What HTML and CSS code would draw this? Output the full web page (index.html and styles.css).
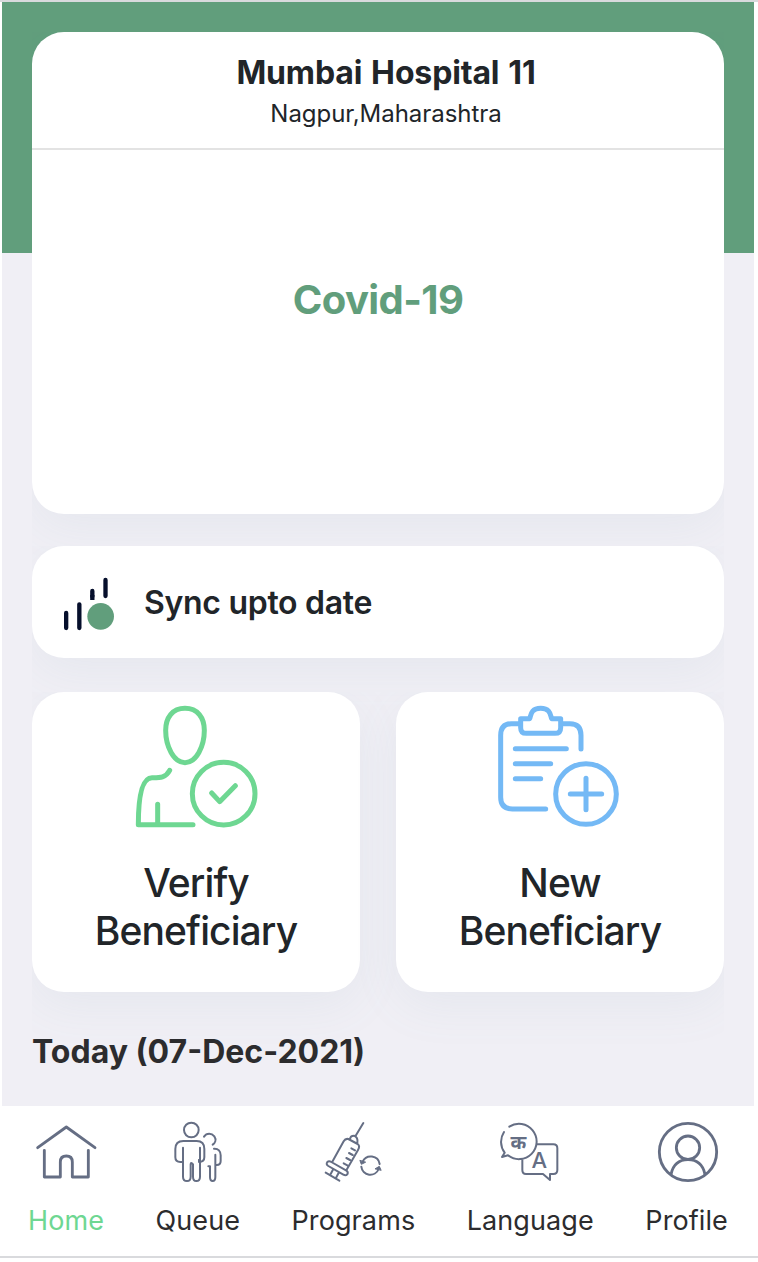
FILE: index.html
```html
<!DOCTYPE html>
<html lang="en">
<head>
<meta charset="utf-8">
<title>Home</title>
<link rel="stylesheet" href="styles.css">
</head>
<body>
<div class="app">
  <main class="content">
    <section class="card program">
      <header class="facility">
        <h1 class="facility-name">Mumbai Hospital 11</h1>
        <p class="facility-place">Nagpur,Maharashtra</p>
      </header>
      <div class="program-name">Covid-19</div>
    </section>
    <section class="card sync">
      <svg width="54" height="56" viewBox="126 258 162 168">
        <g stroke="#060f2c" stroke-width="13" stroke-linecap="round"><path d="M138.500 369v45M178 343v71M217 303v16M256.500 270v48"/><path stroke-linecap="butt" d="M217 315v15"/></g>
        <circle cx="242" cy="379" r="40" fill="#619e7c"/>
      </svg>
      <span class="sync-label">Sync upto date</span>
    </section>
    <section class="tiles">
      <a class="card tile">
        <svg class="tile-icon green" viewBox="36 24 384 384">
          <path d="M195 40c-38 0-58 28-58 66 0 48 24 97 58 97s58-49 58-97c0-38-20-66-58-66zM149 226c-12 23-30 22-53 22-32 0-41 66-41 141H219M113 328v60M275 294l24 26 47-48"/>
          <circle cx="311" cy="296" r="94"/>
        </svg>
        <span class="tile-label">Verify<br>Beneficiary</span>
      </a>
      <a class="card tile">
        <svg class="tile-icon blue" viewBox="48 24 384 384">
          <path d="M121 86H94Q62 86 62 121V307Q62 342 97 342H197M242 86H270Q303 86 303 121V162M122 71H149C153 61 152 40 182 40S211 61 215 71H242V98Q242 115 225 115H139Q122 115 122 98ZM106 161H259M106 206H212M106 251H182M318 250v94M271 297h94"/>
          <circle cx="318" cy="297" r="91"/>
        </svg>
        <span class="tile-label">New<br>Beneficiary</span>
      </a>
    </section>
    <h2 class="today">Today (07-Dec-2021)</h2>
  </main>
  <nav class="nav">
    <a class="nav-item active">
      <svg class="nav-icon bold" viewBox="101 75 192 192"><path d="M112 158L198 96L284 158M132 166V246H180V201Q180 183 198 183T216 201V246H264V166"/></svg>
      <span>Home</span>
    </a>
    <a class="nav-item">
      <svg class="nav-icon" viewBox="498 75 192 192">
        <circle cx="574" cy="105" r="22"/>
        <path d="M549 158V245Q549 258 561 258Q572 258 572 245V208Q572 204 574 204T579 208V245Q579 258 589 258Q600 258 600 245V158M549 201H541Q526 201 526 187V162Q526 138 550 138H590Q613 138 613 162V187Q613 201 597 201V194M612 125C620 113 635 114 643 124C650 134 645 144 638 149M642 161C655 160 662 169 662 181V198Q662 210 650 210M646 179V246Q646 258 638 258Q630 258 630 246V214H625"/>
      </svg>
      <span>Queue</span>
    </a>
    <a class="nav-item">
      <svg class="nav-icon" viewBox="216 75 192 192">
        <path d="M343 84L320 122M303 132Q304 122 315 122Q328 127 325 144M250 200L284 139Q289 130 298 132L326 147Q334 153 327 165L292 226M307 160l11 6M300 174l11 6M292 189l11 6M284 205l11 6M235 201Q240 196 247 201L291 226Q299 230 295 238Q290 243 283 239L238 213Q230 208 235 201ZM253 222l-8 15M270 232l-8 15M230 233L271 257M341 200A27 27 0 0 1 392 207M389 222A27 27 0 0 1 337 215"/>
        <path class="solid" d="M333 197L337 208L349 202ZM396 225L391 214L379 221Z"/>
      </svg>
      <span>Programs</span>
    </a>
    <a class="nav-item">
      <svg class="nav-icon" viewBox="57 75 192 192">
        <path d="M91 95A53 53 0 1 1 87 181L69 186L77 173A54 54 0 0 1 75 111M173 148H223Q235 148 235 160V225Q235 237 223 237H213V255L192 237H141Q130 237 130 225V192"/>
        <text class="glyph" x="118" y="161" font-size="57">क</text>
        <text class="glyph latin" x="181" y="218" font-size="66">A</text>
      </svg>
      <span>Language</span>
    </a>
    <a class="nav-item">
      <svg class="nav-icon bold" viewBox="525 75 192 192"><circle cx="624" cy="171" r="86"/><circle cx="624" cy="158" r="35"/><path d="M573 238C579 210 597 194 624 194S669 210 675 238"/></svg>
      <span>Profile</span>
    </a>
  </nav>
</div>
</body>
</html>
```
FILE: styles.css
```css
* { box-sizing: border-box; margin: 0; padding: 0; }
body {
  height: 1262px;
  overflow: hidden;
  background: #fff;
  font-family: Inter, "Liberation Sans", sans-serif;
  color: #212529;
}
.app {
  height: 1258px;
  padding: 0 4px 0 2px;
  border-top: 2px solid #d9dadd;
  border-bottom: 2px solid #d9dadd;
}
.content {
  height: 1104px;
  padding: 30px 30px 0;
  background: linear-gradient(#619e7c 251px, #f0eff5 251px);
}
.card {
  background: #fff;
  border-radius: 32px;
  box-shadow: 0 14px 48px rgba(110, 150, 170, .08);
}
.program, .sync, .tiles { clip-path: inset(0 0 -64px 0); }
.program { height: 482px; }
.facility {
  height: 118px;
  padding: 20px 0 0 16px;
  border-bottom: 2px solid #e3e3e3;
  text-align: center;
}
.facility-name { font-size: 32px; line-height: 42px; font-weight: 700; letter-spacing: -.15px; word-spacing: 1.500px; }
.facility-place { font-size: 24px; line-height: 40px; letter-spacing: -.05px; }
.program-name {
  padding-top: 120px;
  text-align: center;
  font-size: 40px;
  line-height: 60px;
  font-weight: 700;
  letter-spacing: -.6px;
  color: #619e7c;
}
.sync {
  display: flex;
  align-items: center;
  gap: 28px;
  height: 112px;
  margin-top: 32px;
  padding: 4px 30px 0;
}
.sync-label { margin-bottom: 3px; font-size: 32px; font-weight: 600; letter-spacing: -.3px; }
.tiles { display: flex; gap: 36px; margin-top: 34px; }
.tile {
  display: flex;
  flex-direction: column;
  align-items: center;
  flex: 1;
  height: 300px;
  padding-top: 11px;
}
.tile-icon { width: 128px; height: 128px; fill: none; stroke-width: 15; stroke-linecap: round; stroke-linejoin: round; }
.green { stroke: #6ed792; }
.blue { stroke: #74b9f5; }
.tile-label { margin-top: 28px; font-size: 39px; line-height: 48px; font-weight: 500; letter-spacing: -.9px; text-align: center; }
.today { margin-top: 40px; font-size: 32px; line-height: 40px; font-weight: 700; color: #2c2c2e; }
.nav {
  display: flex;
  justify-content: space-between;
  height: 150px;
  padding: 14px 26px 0;
  background: #fff;
  color: #2c2c2e;
  font-size: 27px;
  line-height: 36px;
  letter-spacing: .1px;
}
.nav-item { display: flex; flex-direction: column; align-items: center; gap: 19px; }
.active { color: #6ed792; }
.nav-icon { width: 64px; height: 64px; fill: none; stroke: #656e84; stroke-width: 6; stroke-linecap: round; stroke-linejoin: round; }
.bold { stroke-width: 8.500; }
.solid { fill: #656e84; stroke-width: 3; }
.glyph { fill: #656e84; stroke: none; text-anchor: middle; font-family: "Noto Sans Devanagari", "Noto Sans", sans-serif; font-weight: 700; letter-spacing: 0; }
.latin { font-family: Inter, sans-serif; font-weight: 500; }
```
